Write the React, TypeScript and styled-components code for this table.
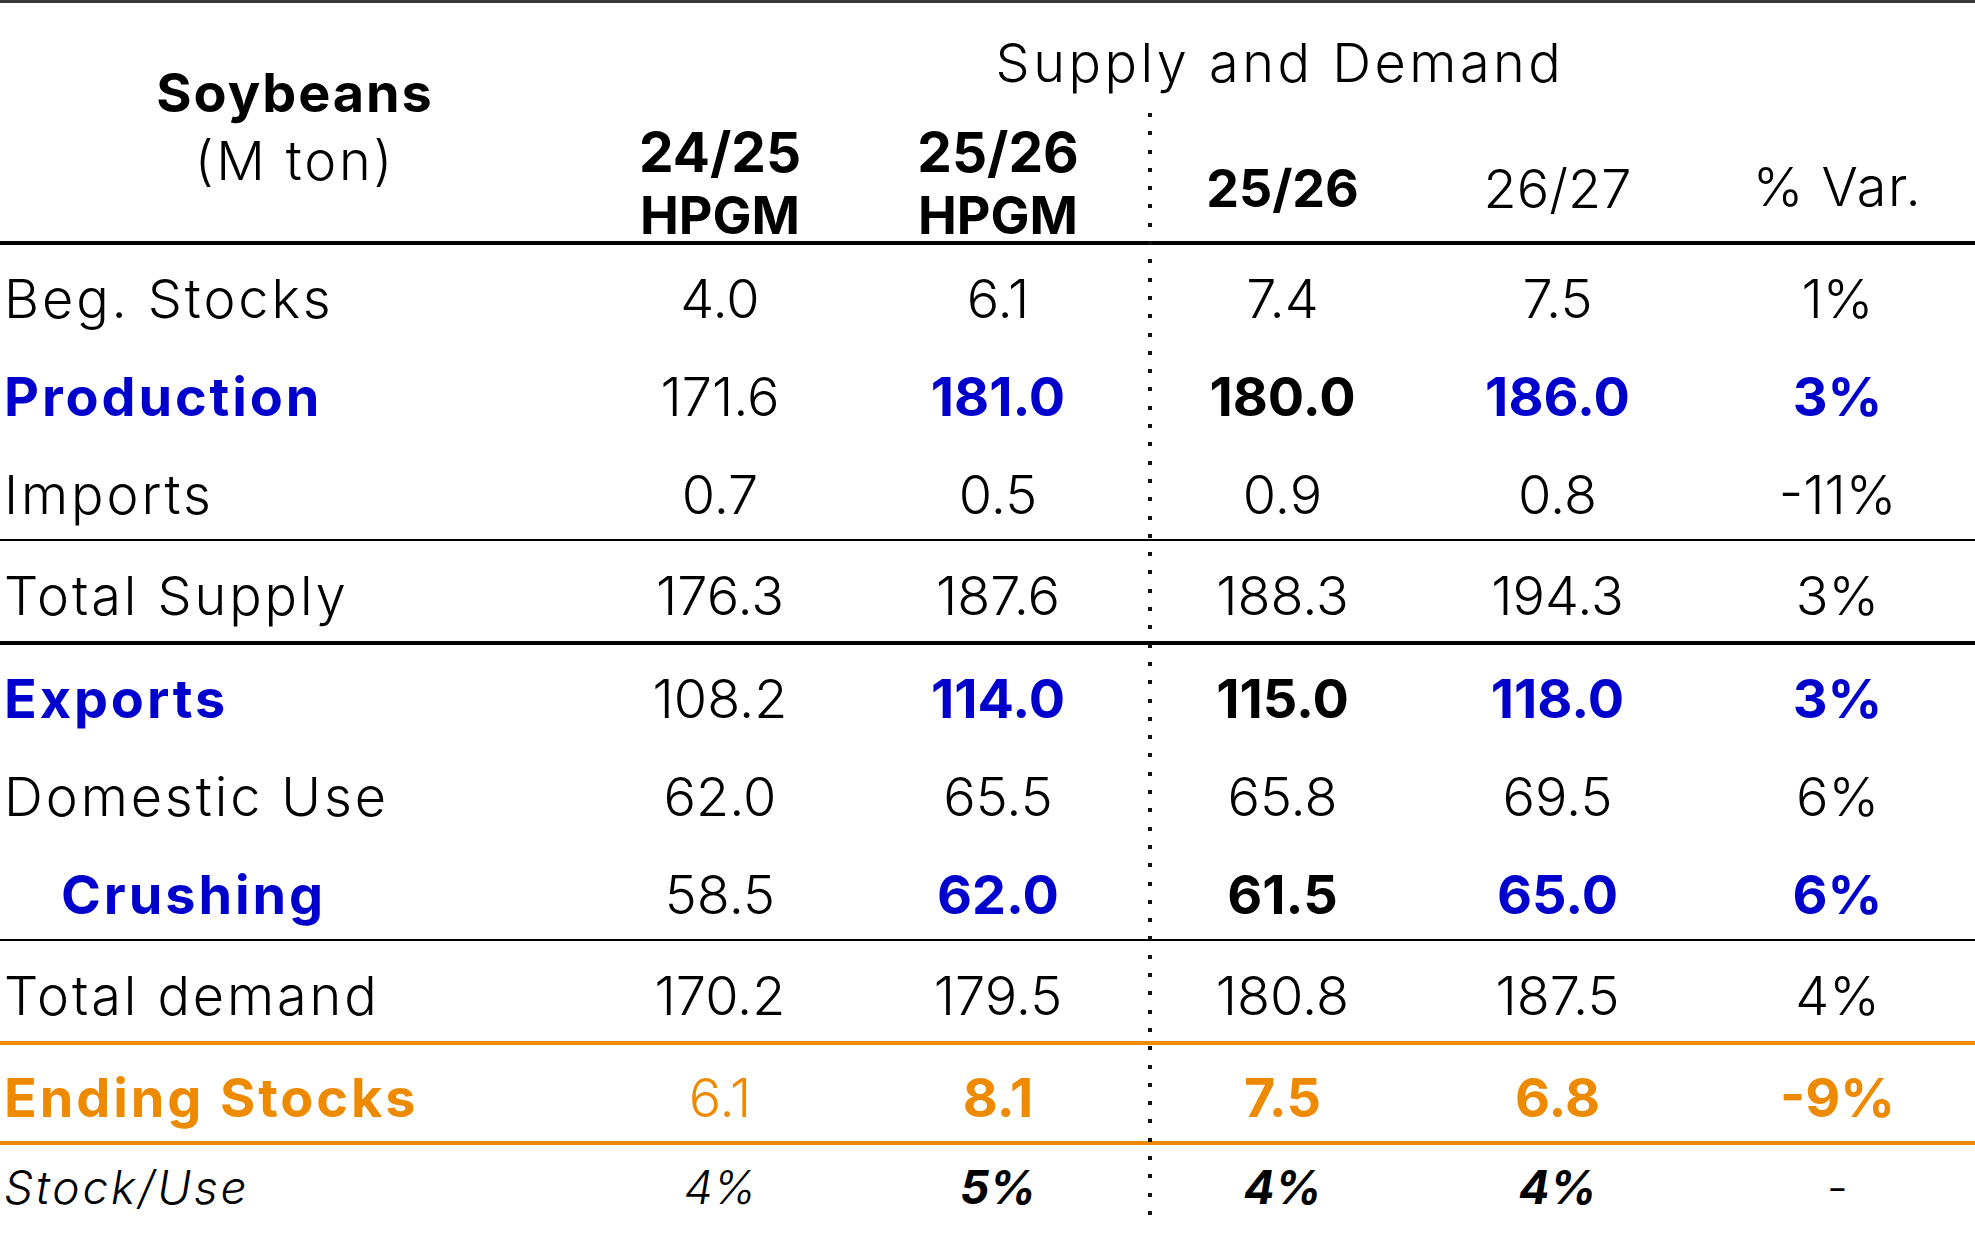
import React from 'react';
import styled, { createGlobalStyle, css } from 'styled-components';

const GlobalStyle = createGlobalStyle`
  html, body {
    margin: 0;
    padding: 0;
    background: #ffffff;
  }
  body {
    font-family: Inter, "Noto Sans", "Liberation Sans", sans-serif;
    color: #000;
  }
`;

const COLS = '580px 280px 290px 265px 285px 275px';
const BLUE = '#0000cc';
const ORANGE = '#ee8a00';

const Page = styled.div`
  width: 1975px;
  height: 1241px;
  overflow: hidden;
`;

const Table = styled.div`
  position: relative;
  width: 1975px;
  &::after {
    content: '';
    position: absolute;
    left: 1148px;
    top: 113px;
    height: 1110px;
    width: 4px;
    background: repeating-linear-gradient(
      to bottom,
      #111 0px,
      #111 4px,
      transparent 4px,
      transparent 18.3px
    );
  }
`;

const Header = styled.div`
  display: grid;
  grid-template-columns: ${COLS};
  grid-template-rows: 92px 146px;
  border-top: 3px solid #3a3a3a;
  border-bottom: 4px solid #000;
  line-height: 1;
`;

const Title = styled.div`
  grid-column: 3 / 6;
  grid-row: 1;
  text-align: center;
  font-size: 54px;
  font-weight: 300;
  letter-spacing: 3.5px;
  padding-top: 33px;
`;

const LabelHead = styled.div`
  grid-column: 1;
  grid-row: 1 / 3;
  display: flex;
  flex-direction: column;
  align-items: center;
  padding-top: 63px;
  padding-left: 10px;
  gap: 14px;
`;

const Product = styled.div`
  font-size: 54px;
  font-weight: 700;
  letter-spacing: 1.9px;
`;

const Unit = styled.div`
  font-size: 54px;
  font-weight: 300;
  letter-spacing: 2.8px;
`;

const YearHead = styled.div<{ $col: number; $shift?: boolean }>`
  grid-column: ${(p) => p.$col};
  grid-row: 2;
  display: flex;
  flex-direction: column;
  align-items: center;
  padding-top: 30px;
  padding-right: ${(p) => (p.$shift ? 14 : 0)}px;
  gap: 10px;
  font-weight: 700;
`;

const Year = styled.div`
  font-size: 55px;
`;

const Source = styled.div`
  font-size: 52px;
`;

const SingleHead = styled.div<{ $bold?: boolean; $top: number; $spacing?: number }>`
  grid-row: 2;
  text-align: center;
  font-size: ${(p) => (p.$bold ? 52 : 54)}px;
  font-weight: ${(p) => (p.$bold ? 700 : 300)};
  letter-spacing: ${(p) => p.$spacing || 0}px;
  padding-top: ${(p) => p.$top}px;
`;

type Rule = 'none' | 'thin' | 'thick' | 'orange';

const ruleCss = {
  none: css``,
  thin: css`border-bottom: 2px solid #000;`,
  thick: css`border-bottom: 4px solid #000;`,
  orange: css`border-bottom: 4px solid ${ORANGE};`,
};

const Row = styled.div<{ $h: number; $rule: Rule; $small?: boolean }>`
  display: grid;
  grid-template-columns: ${COLS};
  align-items: center;
  height: ${(p) => p.$h}px;
  box-sizing: content-box;
  line-height: 1;
  font-size: ${(p) => (p.$small ? 46 : 54)}px;
  ${(p) => ruleCss[p.$rule]}

  & > :nth-child(3) {
    padding-right: 14px;
  }
`;

type Tone = 'black' | 'blue' | 'orange';
const toneColor: Record<Tone, string> = { black: '#000', blue: BLUE, orange: ORANGE };

const Cell = styled.div<{ $bold?: boolean; $tone?: Tone; $italic?: boolean; $small?: boolean }>`
  font-weight: ${(p) => (p.$bold ? 700 : 300)};
  font-style: ${(p) => (p.$italic ? 'italic' : 'normal')};
  color: ${(p) => toneColor[p.$tone || 'black']};
  padding-top: ${(p) => (p.$small ? 0 : 10)}px;
  padding-bottom: ${(p) => (p.$small ? 12 : 0)}px;
  white-space: nowrap;
`;

const Label = styled(Cell)<{ $indent?: boolean }>`
  padding-left: ${(p) => (p.$indent ? 61 : 4)}px;
  letter-spacing: 2.9px;
`;

const Value = styled(Cell)`
  text-align: center;
`;

type V = { t: string; b?: boolean; tone?: Tone; i?: boolean };

type RowDef = {
  label: string;
  labelBold?: boolean;
  labelTone?: Tone;
  indent?: boolean;
  italic?: boolean;
  small?: boolean;
  h: number;
  rule: Rule;
  values: V[];
};

const rows: RowDef[] = [
  {
    label: 'Beg. Stocks',
    h: 98,
    rule: 'none',
    values: [{ t: '4.0' }, { t: '6.1' }, { t: '7.4' }, { t: '7.5' }, { t: '1%' }],
  },
  {
    label: 'Production',
    labelBold: true,
    labelTone: 'blue',
    h: 98,
    rule: 'none',
    values: [
      { t: '171.6' },
      { t: '181.0', b: true, tone: 'blue' },
      { t: '180.0', b: true },
      { t: '186.0', b: true, tone: 'blue' },
      { t: '3%', b: true, tone: 'blue' },
    ],
  },
  {
    label: 'Imports',
    h: 98,
    rule: 'thin',
    values: [{ t: '0.7' }, { t: '0.5' }, { t: '0.9' }, { t: '0.8' }, { t: '-11%' }],
  },
  {
    label: 'Total Supply',
    h: 100,
    rule: 'thick',
    values: [{ t: '176.3' }, { t: '187.6' }, { t: '188.3' }, { t: '194.3' }, { t: '3%' }],
  },
  {
    label: 'Exports',
    labelBold: true,
    labelTone: 'blue',
    h: 98,
    rule: 'none',
    values: [
      { t: '108.2' },
      { t: '114.0', b: true, tone: 'blue' },
      { t: '115.0', b: true },
      { t: '118.0', b: true, tone: 'blue' },
      { t: '3%', b: true, tone: 'blue' },
    ],
  },
  {
    label: 'Domestic Use',
    h: 98,
    rule: 'none',
    values: [{ t: '62.0' }, { t: '65.5' }, { t: '65.8' }, { t: '69.5' }, { t: '6%' }],
  },
  {
    label: 'Crushing',
    labelBold: true,
    labelTone: 'blue',
    indent: true,
    h: 98,
    rule: 'thin',
    values: [
      { t: '58.5' },
      { t: '62.0', b: true, tone: 'blue' },
      { t: '61.5', b: true },
      { t: '65.0', b: true, tone: 'blue' },
      { t: '6%', b: true, tone: 'blue' },
    ],
  },
  {
    label: 'Total demand',
    h: 100,
    rule: 'orange',
    values: [{ t: '170.2' }, { t: '179.5' }, { t: '180.8' }, { t: '187.5' }, { t: '4%' }],
  },
  {
    label: 'Ending Stocks',
    labelBold: true,
    labelTone: 'orange',
    h: 96,
    rule: 'orange',
    values: [
      { t: '6.1', tone: 'orange' },
      { t: '8.1', b: true, tone: 'orange' },
      { t: '7.5', b: true, tone: 'orange' },
      { t: '6.8', b: true, tone: 'orange' },
      { t: '-9%', b: true, tone: 'orange' },
    ],
  },
  {
    label: 'Stock/Use',
    italic: true,
    small: true,
    h: 96,
    rule: 'none',
    values: [
      { t: '4%', i: true },
      { t: '5%', b: true, i: true },
      { t: '4%', b: true, i: true },
      { t: '4%', b: true, i: true },
      { t: '-' },
    ],
  },
];

export default function App() {
  return (
    <Page>
      <GlobalStyle />
      <Table>
        <Header>
          <LabelHead>
            <Product>Soybeans</Product>
            <Unit>(M ton)</Unit>
          </LabelHead>
          <Title>Supply and Demand</Title>
          <YearHead $col={2}>
            <Year>24/25</Year>
            <Source>HPGM</Source>
          </YearHead>
          <YearHead $col={3} $shift>
            <Year>25/26</Year>
            <Source>HPGM</Source>
          </YearHead>
          <SingleHead $bold $top={68}>25/26</SingleHead>
          <SingleHead $top={67}>26/27</SingleHead>
          <SingleHead $top={65} $spacing={1.5}>% Var.</SingleHead>
        </Header>
        {rows.map((r) => (
          <Row key={r.label} $h={r.h} $rule={r.rule} $small={r.small}>
            <Label
              $bold={r.labelBold}
              $tone={r.labelTone}
              $indent={r.indent}
              $italic={r.italic}
              $small={r.small}
            >
              {r.label}
            </Label>
            {r.values.map((v, i) => (
              <Value key={i} $bold={v.b} $tone={v.tone} $italic={v.i} $small={r.small}>
                {v.t}
              </Value>
            ))}
          </Row>
        ))}
      </Table>
    </Page>
  );
}
